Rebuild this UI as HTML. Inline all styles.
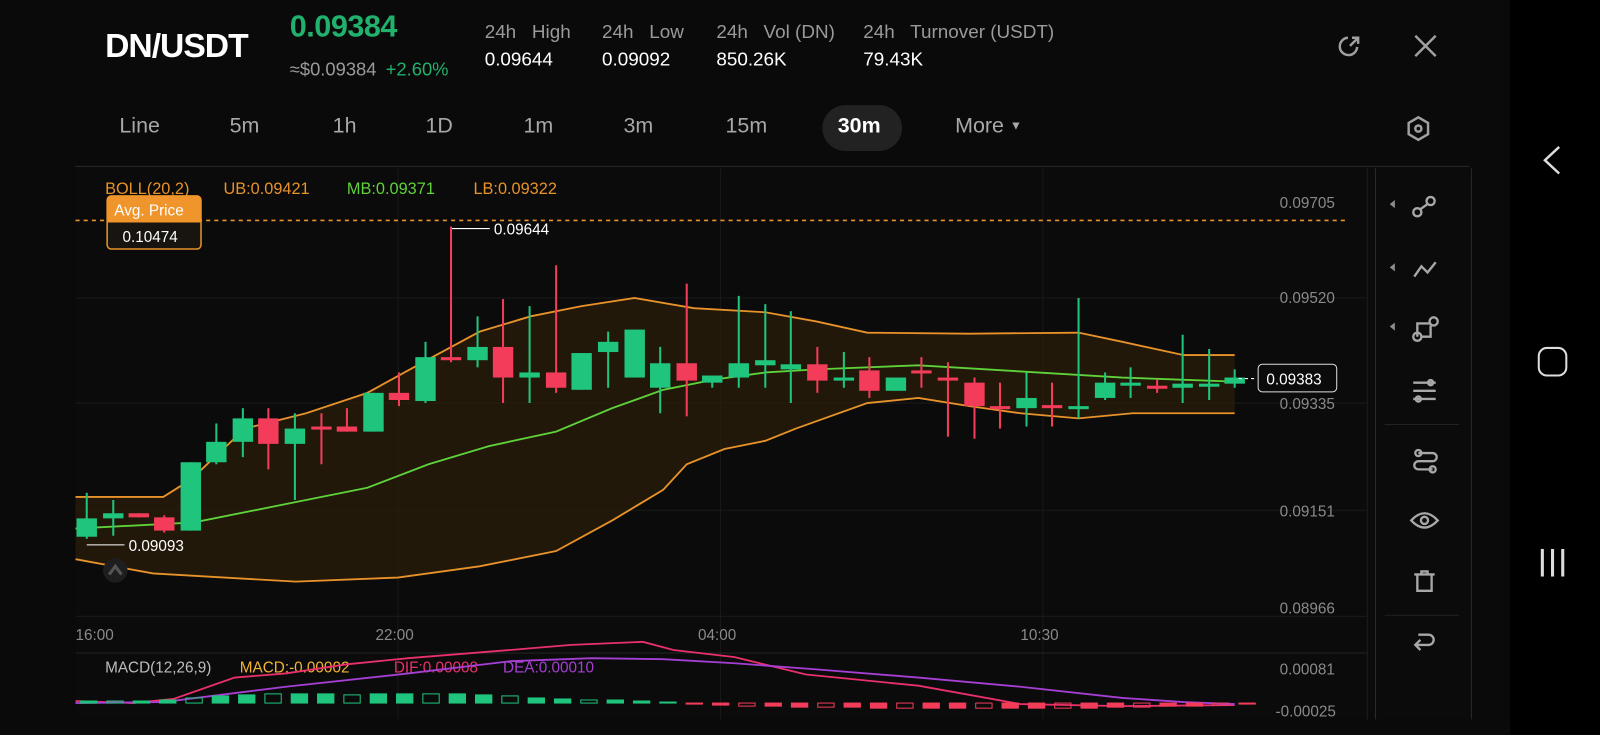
<!DOCTYPE html>
<html><head><meta charset="utf-8"><style>
*{margin:0;padding:0;box-sizing:border-box}
body{width:1600px;height:720px;background:#0a0a0a;font-family:"Liberation Sans",sans-serif;overflow:hidden;position:relative;color:#fff}
#w{position:absolute;left:0;top:0;width:1568px;height:706px;transform:scale(1.0204);transform-origin:0 0}
.t{position:absolute;white-space:nowrap}
.g{color:#9a9a9a}
</style></head><body>
<div style="position:absolute;left:1510px;top:0;width:90px;height:720px;background:#000"></div>
<div id="w">
<div style="position:absolute;left:1480px;top:0;width:120px;height:720px;background:#000"></div>
<div class="t" style="left:103px;top:26px;font-size:33px;font-weight:bold;letter-spacing:-1px">DN/USDT</div>
<div class="t" style="left:284px;top:10px;font-size:30px;font-weight:bold;color:#20b26c;letter-spacing:-0.5px">0.09384</div>
<div class="t" style="left:284px;top:58px;font-size:18px;color:#9a9a9a">≈$0.09384 <span style="color:#20b26c;margin-left:4px">+2.60%</span></div>
<div class="t g" style="left:475px;top:20px;font-size:18.5px">24h&nbsp;&nbsp; High</div>
<div class="t g" style="left:590px;top:20px;font-size:18.5px">24h&nbsp;&nbsp; Low</div>
<div class="t g" style="left:702px;top:20px;font-size:18.5px">24h&nbsp;&nbsp; Vol (DN)</div>
<div class="t g" style="left:846px;top:20px;font-size:18.5px">24h&nbsp;&nbsp; Turnover (USDT)</div>
<div class="t" style="left:475px;top:47px;font-size:18.5px">0.09644</div>
<div class="t" style="left:590px;top:47px;font-size:18.5px">0.09092</div>
<div class="t" style="left:702px;top:47px;font-size:18.5px">850.26K</div>
<div class="t" style="left:846px;top:47px;font-size:18.5px">79.43K</div>
<svg style="position:absolute;left:1308px;top:30px" width="30" height="30" viewBox="0 0 30 30" fill="none" stroke="#a0a0a0" stroke-width="2.4"><path d="M22 16A8.5 8.5 0 1 1 13 7"/><path d="M15 15L23 7M17 7h6v6"/></svg>
<svg style="position:absolute;left:1384px;top:32px" width="26" height="26" viewBox="0 0 26 26" stroke="#a0a0a0" stroke-width="2.4"><path d="M3 3L23 23M23 3L3 23"/></svg>
<div class="t" style="left:117px;top:112px;font-size:21px;color:#a8a8a8">Line</div>
<div class="t" style="left:225px;top:112px;font-size:21px;color:#a8a8a8">5m</div>
<div class="t" style="left:326px;top:112px;font-size:21px;color:#a8a8a8">1h</div>
<div class="t" style="left:417px;top:112px;font-size:21px;color:#a8a8a8">1D</div>
<div class="t" style="left:513px;top:112px;font-size:21px;color:#a8a8a8">1m</div>
<div class="t" style="left:611px;top:112px;font-size:21px;color:#a8a8a8">3m</div>
<div class="t" style="left:711px;top:112px;font-size:21px;color:#a8a8a8">15m</div>
<div style="position:absolute;left:806px;top:103px;width:78px;height:45px;border-radius:23px;background:#222"></div>
<div class="t" style="left:821px;top:112px;font-size:21px;font-weight:bold">30m</div>
<div class="t" style="left:936px;top:112px;font-size:21px;color:#a8a8a8">More <span style="font-size:12px;vertical-align:3px">▼</span></div>
<svg style="position:absolute;left:1376px;top:112px" width="28" height="28" viewBox="0 0 28 28" fill="none" stroke="#a0a0a0" stroke-width="2.4"><path d="M14 3L23.5 8.5V19.5L14 25L4.5 19.5V8.5Z"/><circle cx="14" cy="14" r="3"/></svg>
<svg style="position:absolute;left:1506px;top:140px" width="30" height="36" fill="none" stroke="#ddd" stroke-width="2.4"><path d="M22 4L8 17L22 30"/></svg>
<div style="position:absolute;left:1507px;top:340px;width:29px;height:29px;border:2.6px solid #ddd;border-radius:9px"></div>
<div style="position:absolute;left:1510px;top:538px;width:3px;height:27px;background:#ddd;box-shadow:10px 0 #ddd,20px 0 #ddd"></div>

<svg style="position:absolute;left:0;top:0" width="1480" height="720" id="ch" font-family="Liberation Sans, sans-serif">
<rect x="74" y="163" width="1366" height="540" fill="#0b0b0b"/>
<line x1="74" y1="163" x2="1440" y2="163" stroke="#2a2a2a"/>
<line x1="1348" y1="165" x2="1348" y2="705" stroke="#2a2a2a"/>
<line x1="1442" y1="165" x2="1442" y2="705" stroke="#2a2a2a"/>
<line x1="1340" y1="165" x2="1340" y2="705" stroke="#1c1c1c"/>
<g stroke="#1a1a1a"><line x1="74" y1="292" x2="1340" y2="292"/><line x1="74" y1="395" x2="1340" y2="395"/><line x1="74" y1="500" x2="1340" y2="500"/><line x1="74" y1="604" x2="1340" y2="604"/><line x1="74" y1="640" x2="1340" y2="640" stroke="#222"/>
<line x1="390" y1="165" x2="390" y2="705"/><line x1="706" y1="165" x2="706" y2="705"/><line x1="1022" y1="165" x2="1022" y2="705"/></g>
<g fill="#8a8a8a" font-size="15"><text x="1254" y="204">0.09705</text><text x="1254" y="297">0.09520</text><text x="1254" y="401">0.09335</text><text x="1254" y="506">0.09151</text><text x="1254" y="601">0.08966</text><text x="1254" y="661">0.00081</text><text x="1250" y="702">-0.00025</text>
<text x="74" y="627">16:00</text><text x="368" y="627">22:00</text><text x="684" y="627">04:00</text><text x="1000" y="627">10:30</text></g>
<g id="bb"></g>
<line x1="74" y1="216" x2="1318" y2="216" stroke="#e8922a" stroke-width="1.6" stroke-dasharray="4 4"/>
<g font-size="16"><text x="103" y="190" fill="#e8922a">BOLL(20,2)</text><text x="219" y="190" fill="#e8922a">UB:0.09421</text><text x="340" y="190" fill="#5fd13a">MB:0.09371</text><text x="464" y="190" fill="#e8922a">LB:0.09322</text></g>
<rect x="105" y="192" width="92" height="52" rx="4" fill="#181410" stroke="#e8922a" stroke-width="1.5"/>
<path d="M105 196a4 4 0 0 1 4-4h84a4 4 0 0 1 4 4v22h-92z" fill="#f0952b"/>
<text x="112" y="211" fill="#fff" font-size="15">Avg. Price</text>
<text x="120" y="237" fill="#fff" font-size="15">0.10474</text>
<g id="cd"></g>
<line x1="443" y1="224" x2="480" y2="224" stroke="#fff"/><text x="484" y="230" fill="#fff" font-size="15">0.09644</text>
<line x1="85" y1="534" x2="122" y2="534" stroke="#fff"/><text x="126" y="540" fill="#fff" font-size="15">0.09093</text>
<line x1="1214" y1="371" x2="1232" y2="371" stroke="#fff" stroke-dasharray="3 3"/>
<rect x="1233" y="357" width="77" height="27" rx="4" fill="#0b0b0b" stroke="#ddd"/>
<text x="1241" y="377" fill="#fff" font-size="15">0.09383</text>
<circle cx="113" cy="559" r="12" fill="#1e1e1e"/><path d="M107 563l6-8 6 8" stroke="#555" stroke-width="3" fill="none"/>
<g font-size="15"><text x="103" y="659" fill="#bdbdbd">MACD(12,26,9)</text><text x="235" y="659" fill="#f2b432">MACD:-0.00002</text><text x="386" y="659" fill="#e8306a">DIF:0.00008</text><text x="493" y="659" fill="#a63fd4">DEA:0.00010</text></g>
<g id="mc"></g>
<g fill="#8d8d8d"><path d="M1362 200l5-4v8z"/><path d="M1362 262l5-4v8z"/><path d="M1362 320l5-4v8z"/></g>
<g fill="none" stroke="#a8a8a8" stroke-width="2.3">
<circle cx="1389" cy="208" r="4"/><circle cx="1402" cy="197" r="4"/><path d="M1392 205l7-5"/>
<path d="M1386 271l7-10 6 6 8-10"/>
<path d="M1389 330v-13h12"/><circle cx="1389" cy="330" r="4"/><circle cx="1405" cy="315" r="4"/><path d="M1393 330h9v-11"/>
<path d="M1385 375h22M1385 383h22M1385 391h22"/><circle cx="1402" cy="375" r="2.5"/><circle cx="1390" cy="391" r="2.5"/>
<path d="M1390 444h14a4 4 0 0 1 0 8h-14a4 4 0 0 0 0 8h14"/><circle cx="1390" cy="444" r="3"/><circle cx="1404" cy="460" r="3"/>
<path d="M1383 510q13-14 26 0q-13 14-26 0z"/><circle cx="1396" cy="510" r="3.5"/>
<path d="M1386 563h20M1393 563v-3h6v3M1389 563v16h14v-16"/>
<path d="M1392 627l-5 5 5 5M1387 632h13a5 5 0 0 0 0-10h-10"/>
</g>
<line x1="1357" y1="416" x2="1430" y2="416" stroke="#222"/><line x1="1357" y1="603" x2="1430" y2="603" stroke="#222"/>
</svg>
</div>
<script>
const NS="http://www.w3.org/2000/svg";
function el(p,t,a){const e=document.createElementNS(NS,t);for(const k in a)e.setAttribute(k,a[k]);document.getElementById(p).appendChild(e);return e}
const up=[[74,487],[160,487],[187,470],[240,420],[300,405],[360,385],[420,352],[470,325],[520,310],[570,300],[622,292],[680,302],[750,306],[800,315],[850,326],[950,327],[1057,326],[1100,335],[1160,348],[1210,348]];
const lo=[[74,548],[150,562],[290,570],[390,566],[470,555],[545,540],[600,510],[650,480],[673,455],[710,440],[750,432],[780,420],[850,395],[900,390],[950,398],[1000,405],[1057,410],[1110,405],[1210,405]];
const md=[[74,518],[190,512],[300,490],[360,478],[420,455],[480,437],[545,423],[600,400],[650,382],[700,372],[750,365],[800,362],[900,358],[1000,364],[1100,370],[1210,374]];
const pts=a=>a.map(p=>p.join(',')).join(' ');
el('bb','polygon',{points:pts(up.concat(lo.slice().reverse())),fill:'#2a1d0b',opacity:'0.75'});
el('bb','polyline',{points:pts(up),fill:'none',stroke:'#e8922a','stroke-width':1.8});
el('bb','polyline',{points:pts(lo),fill:'none',stroke:'#e8922a','stroke-width':1.8});
el('bb','polyline',{points:pts(md),fill:'none',stroke:'#5fd13a','stroke-width':1.8});
const G='#1fc47d',R='#f23c5a';
const C=[[85,508,526,483,528,G],[111,503,508,490,525,G],[136,503,507,503,507,R],[161,507,520,505,522,R],[187,453,520,453,520,G],[212,433,453,415,455,G],[238,410,433,400,448,G],[263,410,435,400,460,R],[289,420,435,405,490,G],[315,418,421,405,455,R],[340,418,423,400,423,R],[366,385,423,385,423,G],[391,385,392,365,398,R],[417,350,393,335,395,G],[442,350,353,222,355,R],[468,340,353,310,360,G],[493,340,370,293,395,R],[519,365,370,300,395,G],[545,365,380,260,385,R],[570,346,382,346,382,G],[596,335,345,325,380,G],[622,323,370,323,370,G],[647,356,380,340,405,G],[673,356,373,278,408,R],[698,368,375,368,380,G],[724,356,370,290,380,G],[750,353,358,298,380,G],[775,357,362,305,395,G],[801,357,373,340,385,R],[827,370,373,345,380,G],[852,363,383,350,390,R],[878,370,383,370,383,G],[903,363,365,350,380,R],[929,370,372,355,428,R],[955,375,398,370,430,R],[980,398,400,375,420,R],[1006,390,400,365,418,G],[1031,397,400,375,418,R],[1057,398,400,292,410,G],[1083,375,390,365,392,G],[1108,375,378,360,390,G],[1134,378,381,372,385,R],[1159,376,380,328,395,G],[1185,376,378,342,392,G],[1210,370,376,362,380,G]];
C.forEach(c=>{el('cd','line',{x1:c[0],x2:c[0],y1:c[3],y2:c[4],stroke:c[5],'stroke-width':2});el('cd','rect',{x:c[0]-10,y:c[1],width:20,height:Math.max(c[2]-c[1],3),fill:c[5]});});
el('mc','polyline',{points:'74,687 130,689 170,685 230,664 280,660 340,651 400,645 500,637 560,632 630,629 660,637 720,644 790,661 900,672 1000,690 1100,692 1210,691',fill:'none',stroke:'#e8306a','stroke-width':1.8});
el('mc','polyline',{points:'74,689 160,688 200,683 280,673 400,660 500,648 580,645 650,646 720,650 800,656 900,664 1000,673 1100,684 1160,688 1210,690',fill:'none',stroke:'#a63fd4','stroke-width':1.8});
const hh=[2,2,2,3,5,7,8,9,9,9,8,9,9,9,9,8,7,5,4,3,3,2,1,-1,-2,-3,-3,-4,-4,-4,-5,-5,-5,-5,-5,-5,-5,-5,-5,-4,-4,-3,-3,-2,-1];
hh.forEach((h,i)=>{const x=74+i*25.8+5,col=h>0?G:R,y=h>0?689-h:689,hg=Math.abs(h);
 const f=(i%3==1);el('mc','rect',{x:x,y:y,width:16,height:hg,fill:f?'none':col,stroke:col,'stroke-width':1});});
</script>
</body></html>
